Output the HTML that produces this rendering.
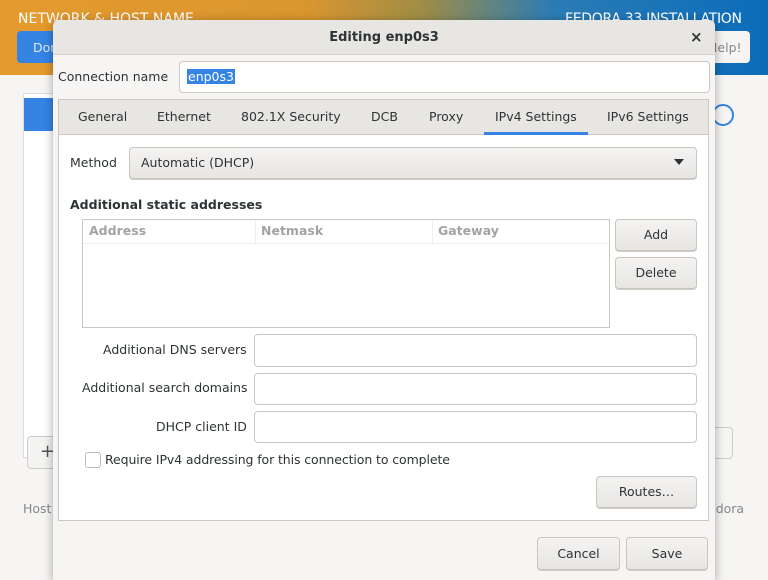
<!DOCTYPE html>
<html><head><meta charset="utf-8"><style>
*{box-sizing:border-box;margin:0;padding:0}
body{width:768px;height:576px;overflow:hidden;background:#f6f5f4;font-family:"DejaVu Sans","Liberation Sans",sans-serif;font-size:12.5px;color:#2e3436;position:relative}
.a{position:absolute}
.btn{position:absolute;background:linear-gradient(#f4f3f2,#e8e6e3);border:1px solid #c9c5c0;border-radius:4px;box-shadow:0 1px 0 #cfcac4;text-align:center;color:#2e3436}
.entry{position:absolute;background:#fff;border:1px solid #cdc7c2;border-radius:4px}
.lbl{position:absolute;text-align:right;white-space:nowrap}
.tab{position:absolute;top:109px;white-space:nowrap;color:#2e3436}
</style></head><body>
<div class="a" style="left:0;top:0;width:768px;height:75px;background:linear-gradient(90deg,#e59a2d 0%,#d9962f 40%,#9f8d46 55%,#2b7cb5 72%,#0b6cba 100%)"></div>
<div class="a" style="left:18px;top:11px;color:#fff;font-size:14px">NETWORK &amp; HOST NAME</div>
<div class="a" style="left:565px;top:11px;color:#fff;font-size:14px;letter-spacing:-0.3px">FEDORA 33 INSTALLATION</div>
<div class="a" style="left:17px;top:31px;width:60px;height:32px;background:#3584e4;border-radius:4px;color:#dfe9f7;padding:9px 0 0 16px">Done</div>
<div class="a" style="left:690px;top:31px;width:60px;height:32px;background:#f6f5f4;border-radius:4px;color:#888;padding:9px 0 0 18px">Help!</div>
<div class="a" style="left:23px;top:93px;width:40px;height:365px;background:#fff;border:1px solid #ddd"></div>
<div class="a" style="left:24px;top:98px;width:36px;height:33px;background:#3584e4"></div>
<div class="a" style="left:27px;top:436px;width:40px;height:33px;border:1px solid #ccc;border-radius:4px;background:#f4f3f2;font-size:18px;padding:4px 0 0 12px;color:#555">+</div>
<div class="a" style="left:700px;top:427px;width:33px;height:32px;border:1px solid #ccc;border-radius:4px"></div>
<div class="a" style="left:712px;top:104px;width:22px;height:22px;border:2px solid #3584e4;border-radius:50%"></div>
<div class="a" style="left:23px;top:501px;color:#888">Host</div>
<div class="a" style="left:708px;top:501px;color:#888">edora</div>

<div class="a" style="left:53px;top:20px;width:662px;height:560px;background:#f6f5f4;border-radius:6px 6px 0 0;box-shadow:0 2px 10px rgba(0,0,0,.35)"></div>
<div class="a" style="left:53px;top:20px;width:662px;height:35px;background:#e8e6e3;border-radius:6px 6px 0 0;border-bottom:1px solid #d6d1cd"></div>
<div class="a" style="left:53px;top:30px;width:662px;text-align:center;font-weight:bold;font-size:13px">Editing enp0s3</div>
<div class="a" style="left:690px;top:28px;font-weight:bold;font-size:15px">×</div>

<div class="lbl" style="left:58px;top:69px">Connection name</div>
<div class="entry" style="left:179px;top:61px;width:531px;height:32px"></div>
<div class="a" style="left:187px;top:69px;background:#3584e4;color:#fff;padding:0 1px">enp0s3</div>

<div class="a" style="left:58px;top:99px;width:651px;height:422px;background:#fff;border:1px solid #cdc7c2"></div>
<div class="a" style="left:59px;top:100px;width:649px;height:35px;background:#e8e6e3;border-bottom:1px solid #cdc7c2"></div>
<div class="tab" style="left:78px">General</div>
<div class="tab" style="left:157px">Ethernet</div>
<div class="tab" style="left:241px">802.1X Security</div>
<div class="tab" style="left:371px">DCB</div>
<div class="tab" style="left:429px">Proxy</div>
<div class="tab" style="left:495px">IPv4 Settings</div>
<div class="tab" style="left:607px">IPv6 Settings</div>
<div class="a" style="left:484px;top:132px;width:104px;height:3px;background:#3584e4"></div>

<div class="lbl" style="left:70px;top:155px">Method</div>
<div class="btn" style="left:129px;top:147px;width:568px;height:32px;text-align:left;padding:7px 0 0 11px">Automatic (DHCP)</div>
<div class="a" style="left:674px;top:159px;width:0;height:0;border-left:5px solid transparent;border-right:5px solid transparent;border-top:6px solid #2e3436"></div>

<div class="a" style="left:70px;top:197px;font-weight:bold">Additional static addresses</div>
<div class="a" style="left:82px;top:219px;width:528px;height:109px;background:#fff;border:1px solid #cdc7c2"></div>
<div class="a" style="left:83px;top:220px;width:526px;height:24px;border-bottom:1px solid #eee"></div>
<div class="a" style="left:255px;top:220px;width:1px;height:24px;background:#eee"></div>
<div class="a" style="left:432px;top:220px;width:1px;height:24px;background:#eee"></div>
<div class="a" style="left:89px;top:223px;color:#a0a4a6;font-weight:bold">Address</div>
<div class="a" style="left:261px;top:223px;color:#a0a4a6;font-weight:bold">Netmask</div>
<div class="a" style="left:438px;top:223px;color:#a0a4a6;font-weight:bold">Gateway</div>
<div class="btn" style="left:615px;top:219px;width:82px;height:32px;padding-top:7px">Add</div>
<div class="btn" style="left:615px;top:257px;width:82px;height:32px;padding-top:7px">Delete</div>

<div class="lbl" style="left:103px;top:342px">Additional DNS servers</div>
<div class="entry" style="left:254px;top:334px;width:443px;height:33px"></div>
<div class="lbl" style="left:82px;top:380px">Additional search domains</div>
<div class="entry" style="left:254px;top:373px;width:443px;height:32px"></div>
<div class="lbl" style="left:156px;top:419px">DHCP client ID</div>
<div class="entry" style="left:254px;top:411px;width:443px;height:32px"></div>

<div class="a" style="left:85px;top:452px;width:16px;height:16px;border:1px solid #bbb;border-radius:3px;background:#fff"></div>
<div class="a" style="left:105px;top:452px;letter-spacing:-0.1px">Require IPv4 addressing for this connection to complete</div>
<div class="btn" style="left:596px;top:476px;width:101px;height:32px;padding-top:7px">Routes…</div>

<div class="btn" style="left:537px;top:537px;width:83px;height:33px;padding-top:8px">Cancel</div>
<div class="btn" style="left:626px;top:537px;width:82px;height:33px;padding-top:8px">Save</div>
</body></html>
